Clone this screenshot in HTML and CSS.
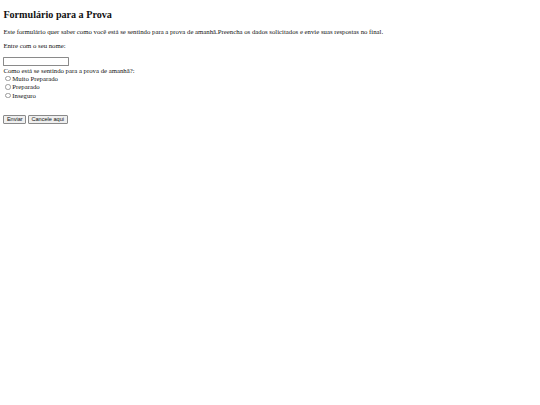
FILE: index.html
```html
<!DOCTYPE html>
<html lang="pt">
<head>
<meta charset="utf-8">
<title>Formulário para a Prova</title>
<link rel="stylesheet" href="styles.css">
</head>
<body>
<h2 class="title">Formulário para a Prova</h2>
<p class="text">Este formulário quer saber como você está se sentindo para a prova de amanhã.Preencha os dados solicitados e envie suas respostas no final.</p>
<form class="form">
<p class="text">Entre com o seu nome:</p>
<div class="field"><input class="name" type="text"></div>
<div class="question">Como está se sentindo para a prova de amanhã?:</div>
<label class="option"><input class="radio" type="radio" name="s">Muito Preparado</label>
<label class="option"><input class="radio" type="radio" name="s">Preparado</label>
<label class="option"><input class="radio" type="radio" name="s">Inseguro</label>
<div class="actions"><input class="btn" type="submit" value="Enviar"><input class="btn" type="reset" value="Cancele aqui"></div>
</form>
</body>
</html>
```

FILE: styles.css
```css
html, body {
  background: #fff;
}
body {
  margin: 3.375px;
  font-family: "Liberation Serif", "Times New Roman", serif;
  font-size: 6.75px;
  color: #111;
}
.title {
  font-size: 10.125px;
  font-weight: bold;
  margin: 6px 0 7.8px;
}
.text {
  margin: 7.3px 0;
}
.form {
  margin: 0;
}
.field {
  line-height: 0;
}
.name {
  box-sizing: border-box;
  width: 66px;
  height: 9px;
  margin: 0;
  padding: 0.4px 0.85px;
  font-size: 5.6px;
  border: 0.6px solid #8a8a8a;
  border-radius: 0.85px;
  background: #fff;
}
.question {
  line-height: 9px;
}
.option {
  display: block;
  line-height: 8.6px;
  height: 8.6px;
}
.radio {
  appearance: none;
  -webkit-appearance: none;
  box-sizing: border-box;
  width: 5.5px;
  height: 5.5px;
  margin: 0 1.4px 0 2.1px;
  vertical-align: -0.5px;
  border: 0.6px solid #9a9a9a;
  border-radius: 50%;
  background: #fff;
}
.actions {
  margin-top: 14.3px;
  display: flex;
  align-items: flex-start;
  gap: 1.7px;
}
.btn {
  font-family: "Liberation Sans", Arial, sans-serif;
  font-size: 5.6px;
  height: 9px;
  padding: 0 2.5px;
  margin: 0;
  border: 0.6px solid #8a8a8a;
  border-radius: 1px;
  background: #efefef;
  color: #111;
}
```
